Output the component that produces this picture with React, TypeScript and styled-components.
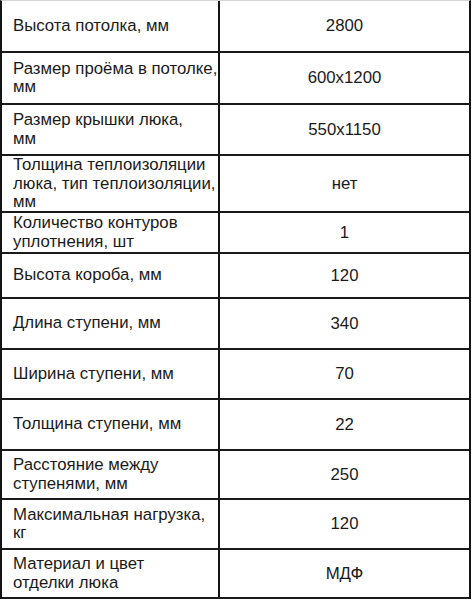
import React from "react";
import styled, { createGlobalStyle } from "styled-components";

const Global = createGlobalStyle`
  html, body { margin: 0; padding: 0; background: #ffffff; }
  body { font-family: "Liberation Sans", Arial, sans-serif; }
`;

const Table = styled.div`
  width: 471px;
  box-sizing: border-box;
  border-top: 1px solid #d4d4d4;
  border-left: 2px solid #141414;
  border-right: 2px solid #141414;
  display: flex;
  flex-direction: column;
  background: #fff;
`;

const Row = styled.div<{ $h: number }>`
  display: grid;
  grid-template-columns: 218px 1fr;
  height: ${(p) => p.$h}px;
  box-sizing: border-box;
  border-bottom: 2px solid #1a1a1a;
`;

const LabelCell = styled.div`
  box-sizing: border-box;
  border-right: 2px solid #141414;
  padding: 0 0 0 11px;
  display: flex;
  align-items: center;
  font-size: 16.8px;
  line-height: 18.5px;
  color: #1a1a1a;
  white-space: nowrap;
`;

const ValueCell = styled.div`
  display: flex;
  align-items: center;
  justify-content: center;
  font-size: 16.8px;
  line-height: 18px;
  color: #1a1a1a;
`;

type Item = { label: string[]; value: string; h: number };

const rows: Item[] = [
  { label: ["Высота потолка, мм"], value: "2800", h: 52 },
  { label: ["Размер проёма в потолке,", "мм"], value: "600x1200", h: 52 },
  { label: ["Размер крышки люка,", "мм"], value: "550x1150", h: 51 },
  {
    label: ["Толщина теплоизоляции", "люка, тип теплоизоляции,", "мм"],
    value: "нет",
    h: 57,
  },
  { label: ["Количество контуров", "уплотнения, шт"], value: "1", h: 41 },
  { label: ["Высота короба, мм"], value: "120", h: 45 },
  { label: ["Длина ступени, мм"], value: "340", h: 51 },
  { label: ["Ширина ступени, мм"], value: "70", h: 50 },
  { label: ["Толщина ступени, мм"], value: "22", h: 51 },
  { label: ["Расстояние между", "ступенями, мм"], value: "250", h: 49 },
  { label: ["Максимальная нагрузка,", "кг"], value: "120", h: 50 },
  { label: ["Материал и цвет", "отделки люка"], value: "МДФ", h: 49 },
];

export default function App() {
  return (
    <>
      <Global />
      <Table>
        {rows.map((r, i) => (
          <Row key={i} $h={r.h}>
            <LabelCell>
              <span>
                {r.label.map((l, j) => (
                  <React.Fragment key={j}>
                    {j > 0 && <br />}
                    {l}
                  </React.Fragment>
                ))}
              </span>
            </LabelCell>
            <ValueCell>{r.value}</ValueCell>
          </Row>
        ))}
      </Table>
    </>
  );
}
